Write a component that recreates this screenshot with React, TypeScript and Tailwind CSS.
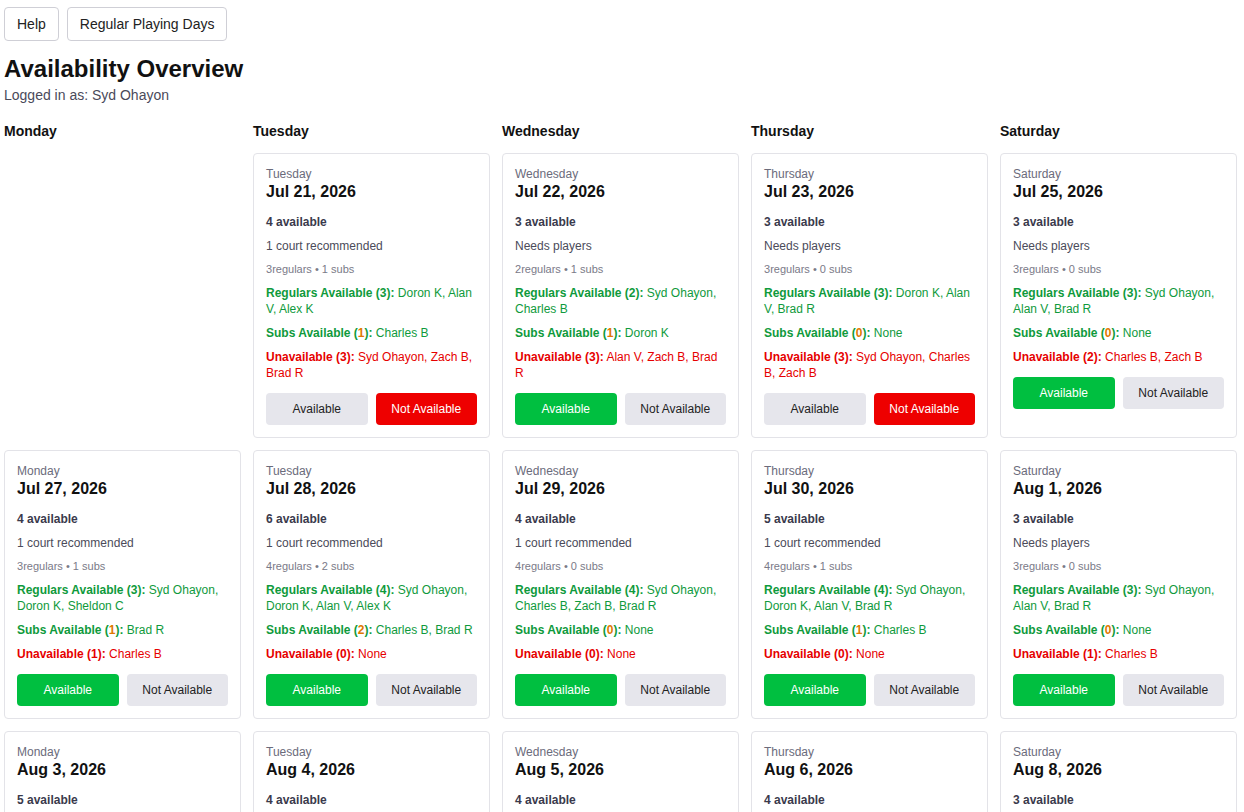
import React from "react";

type Day = {
  day: string;
  date: string;
  available: number;
  status: string;
  regs: number;
  subs: number;
  regulars: string[];
  subsList: string[];
  unavailable: string[];
  choice: "yes" | "no";
};

function d(
  day: string,
  date: string,
  available: number,
  status: string,
  regulars: string[],
  subsList: string[],
  unavailable: string[],
  choice: "yes" | "no"
): Day {
  return {
    day,
    date,
    available,
    status,
    regs: regulars.length,
    subs: subsList.length,
    regulars,
    subsList,
    unavailable,
    choice,
  };
}

const COURT = "1 court recommended";
const NEEDS = "Needs players";

const rows: (Day | null)[][] = [
  [
    null,
    d("Tuesday", "Jul 21, 2026", 4, COURT, ["Doron K", "Alan V", "Alex K"], ["Charles B"], ["Syd Ohayon", "Zach B", "Brad R"], "no"),
    d("Wednesday", "Jul 22, 2026", 3, NEEDS, ["Syd Ohayon", "Charles B"], ["Doron K"], ["Alan V", "Zach B", "Brad R"], "yes"),
    d("Thursday", "Jul 23, 2026", 3, NEEDS, ["Doron K", "Alan V", "Brad R"], [], ["Syd Ohayon", "Charles B", "Zach B"], "no"),
    d("Saturday", "Jul 25, 2026", 3, NEEDS, ["Syd Ohayon", "Alan V", "Brad R"], [], ["Charles B", "Zach B"], "yes"),
  ],
  [
    d("Monday", "Jul 27, 2026", 4, COURT, ["Syd Ohayon", "Doron K", "Sheldon C"], ["Brad R"], ["Charles B"], "yes"),
    d("Tuesday", "Jul 28, 2026", 6, COURT, ["Syd Ohayon", "Doron K", "Alan V", "Alex K"], ["Charles B", "Brad R"], [], "yes"),
    d("Wednesday", "Jul 29, 2026", 4, COURT, ["Syd Ohayon", "Charles B", "Zach B", "Brad R"], [], [], "yes"),
    d("Thursday", "Jul 30, 2026", 5, COURT, ["Syd Ohayon", "Doron K", "Alan V", "Brad R"], ["Charles B"], [], "yes"),
    d("Saturday", "Aug 1, 2026", 3, NEEDS, ["Syd Ohayon", "Alan V", "Brad R"], [], ["Charles B"], "yes"),
  ],
  [
    d("Monday", "Aug 3, 2026", 5, COURT, ["Syd Ohayon", "Doron K", "Alan V", "Sheldon C"], ["Brad R"], ["Charles B"], "yes"),
    d("Tuesday", "Aug 4, 2026", 4, COURT, ["Syd Ohayon", "Doron K", "Alan V"], ["Brad R"], ["Charles B"], "yes"),
    d("Wednesday", "Aug 5, 2026", 4, COURT, ["Syd Ohayon", "Charles B", "Zach B"], ["Doron K"], [], "yes"),
    d("Thursday", "Aug 6, 2026", 4, COURT, ["Syd Ohayon", "Doron K", "Alan V"], ["Charles B"], [], "yes"),
    d("Saturday", "Aug 8, 2026", 3, NEEDS, ["Syd Ohayon", "Alan V", "Brad R"], [], ["Charles B"], "yes"),
  ],
];

const headers = ["Monday", "Tuesday", "Wednesday", "Thursday", "Saturday"];

function list(names: string[]) {
  return names.length ? names.join(", ") : "None";
}

function DayCard({ item }: { item: Day }) {
  return (
    <div className="flex flex-col rounded border border-[#e3e3e8] bg-white p-3">
      <div className="text-[12px] leading-4 text-[#6b6b7b]">{item.day}</div>
      <div className="text-[16px] font-bold leading-5 text-[#111]">{item.date}</div>
      <div className="mt-3 text-[12px] font-bold leading-4 text-[#3a3a4c]">
        {item.available} available
      </div>
      <div className="mt-2 text-[12px] leading-4 text-[#4b4b5a]">{item.status}</div>
      <div className="mt-2 text-[11px] leading-[15px] text-[#7a7a88]">
        {item.regs}regulars • {item.subs} subs
      </div>
      <div className="mt-2 text-[12px] leading-4 text-[#0f9a3c]">
        <span className="font-bold">Regulars Available ({item.regs}):</span>{" "}
        {list(item.regulars)}
      </div>
      <div className="mt-2 text-[12px] leading-4 text-[#0f9a3c]">
        <span className="font-bold">
          Subs Available (<span className="text-[#e07800]">{item.subs}</span>):
        </span>{" "}
        {list(item.subsList)}
      </div>
      <div className="mt-2 text-[12px] leading-4 text-[#e60000]">
        <span className="font-bold">Unavailable ({item.unavailable.length}):</span>{" "}
        {list(item.unavailable)}
      </div>
      <div className="mt-3 flex gap-2">
        <button
          className={
            item.choice === "yes"
              ? "h-8 flex-1 rounded bg-[#00bf40] text-[12px] text-white"
              : "h-8 flex-1 rounded bg-[#e6e6ec] text-[12px] text-[#222]"
          }
        >
          Available
        </button>
        <button
          className={
            item.choice === "no"
              ? "h-8 flex-1 rounded bg-[#ee0000] text-[12px] text-white"
              : "h-8 flex-1 rounded bg-[#e6e6ec] text-[12px] text-[#222]"
          }
        >
          Not Available
        </button>
      </div>
    </div>
  );
}

export default function App() {
  return (
    <div className="min-h-screen bg-white px-1 pt-[7px] font-['Liberation_Sans',Arial,sans-serif] text-[#111]">
      <div className="flex gap-2">
        <button className="h-[34px] rounded border border-[#cfcfd6] bg-white px-3 text-[14px] text-[#222]">
          Help
        </button>
        <button className="h-[34px] rounded border border-[#cfcfd6] bg-white px-3 text-[14px] text-[#222]">
          Regular Playing Days
        </button>
      </div>
      <h1 className="mt-[14px] text-[24px] font-bold leading-7">Availability Overview</h1>
      <div className="mt-1 text-[14px] leading-4 text-[#4a4a5a]">Logged in as: Syd Ohayon</div>
      <div className="mt-[18px] grid w-[1233px] grid-cols-5 gap-3">
        {headers.map((h) => (
          <div key={h} className="text-[14px] font-bold leading-5">
            {h}
          </div>
        ))}
        {rows.map((row, i) =>
          row.map((item, j) =>
            item ? <DayCard key={`${i}-${j}`} item={item} /> : <div key={`${i}-${j}`} />
          )
        )}
      </div>
    </div>
  );
}
